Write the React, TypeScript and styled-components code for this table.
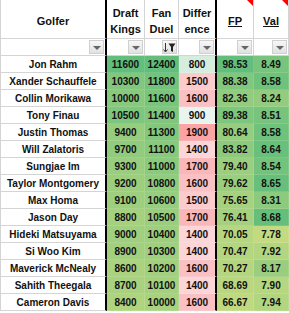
import React from 'react';
import styled, { createGlobalStyle } from 'styled-components';

const GlobalStyle = createGlobalStyle`
    html, body {
        margin: 0;
        padding: 0;
        background: #FFF;
    }
    body {
        font-family: "Liberation Sans", Arial, sans-serif;
    }
`;

type Row = [string, number, number, number, number, number];

const rows: Row[] = [
    ['Jon Rahm', 11600, 12400, 800, 98.53, 8.49],
    ['Xander Schauffele', 10300, 11800, 1500, 88.38, 8.58],
    ['Collin Morikawa', 10000, 11600, 1600, 82.36, 8.24],
    ['Tony Finau', 10500, 11400, 900, 89.38, 8.51],
    ['Justin Thomas', 9400, 11300, 1900, 80.64, 8.58],
    ['Will Zalatoris', 9700, 11100, 1400, 83.82, 8.64],
    ['Sungjae Im', 9300, 11000, 1700, 79.40, 8.54],
    ['Taylor Montgomery', 9200, 10800, 1600, 79.62, 8.65],
    ['Max Homa', 9100, 10600, 1500, 75.65, 8.31],
    ['Jason Day', 8800, 10500, 1700, 76.41, 8.68],
    ['Hideki Matsuyama', 9000, 10400, 1400, 70.05, 7.78],
    ['Si Woo Kim', 8900, 10300, 1400, 70.47, 7.92],
    ['Maverick McNealy', 8600, 10200, 1600, 70.27, 8.17],
    ['Sahith Theegala', 8700, 10100, 1400, 68.69, 7.90],
    ['Cameron Davis', 8400, 10000, 1600, 66.67, 7.94],
];

const GREEN = [99, 190, 123];
const YELLOW = [255, 235, 132];
const WHITE = [252, 252, 255];
const RED = [248, 105, 107];

const mix = (a: number[], b: number[], t: number) => {
    const k = Math.max(0, Math.min(1, t));
    const c = a.map((v, i) => Math.round(v + (b[i] - v) * k));
    return `rgb(${c[0]}, ${c[1]}, ${c[2]})`;
};

// excel style colour scales, high = green
const scale = (v: number, top: number, mid: number) => mix(GREEN, YELLOW, (top - v) / (top - mid));

const diffScale = (v: number) =>
    v <= 1000 ? mix(WHITE, GREEN, (1000 - v) / 800) : mix(WHITE, RED, (v - 1000) / 1500);

const Sheet = styled.div`
    display: grid;
    grid-template-columns: 107px 38px 34px 38px 37px 35px;
    grid-auto-rows: 17px;
    grid-template-rows: 39px 17px;
    width: 289px;
    font-size: 10px;
    font-weight: 700;
    color: #111;
`;

const Cell = styled.div<{ $thick?: boolean; $first?: boolean; $bg?: string }>`
    box-sizing: border-box;
    display: flex;
    align-items: center;
    justify-content: center;
    white-space: nowrap;
    background: ${(p) => p.$bg || '#FFF'};
    border-bottom: 1px solid ${(p) => (p.$bg ? 'rgba(255, 255, 255, 0.12)' : '#D4D4D4')};
    border-right: ${(p) => (p.$thick ? '2px solid #000' : p.$bg ? '1px solid rgba(255, 255, 255, 0.12)' : '1px solid #D4D4D4')};
    border-left: ${(p) => (p.$first ? '1px solid #D4D4D4' : 'none')};
`;

const HeadCell = styled(Cell)<{ $note?: boolean }>`
    position: relative;
    font-size: 11px;
    line-height: 16px;
    text-align: center;
    padding-top: 3px;

    &::after {
        content: '';
        display: ${(p) => (p.$note ? 'block' : 'none')};
        position: absolute;
        top: 0;
        right: 0;
        border-top: 6px solid #FF0000;
        border-left: 6px solid transparent;
    }
`;

const Underlined = styled.span`
    text-decoration: underline;
`;

const FilterCell = styled(Cell)`
    justify-content: flex-end;
    align-items: flex-start;
    padding: 1px 1px 0 0;
`;

const DropButton = styled.div`
    box-sizing: border-box;
    width: 15px;
    height: 14px;
    display: flex;
    align-items: center;
    justify-content: center;
    background: linear-gradient(#F7F7F7, #E1E1E1);
    border: 1px solid #D0D0D0;
`;

const Arrow = styled.div`
    width: 0;
    height: 0;
    border-left: 4px solid transparent;
    border-right: 4px solid transparent;
    border-top: 4px solid #666;
    margin-top: 1px;
`;

const Dropdown: React.FC<{ sorted?: boolean }> = ({ sorted }) => (
    <DropButton>
        {sorted ? (
            <svg width="13" height="11" viewBox="0 0 13 11">
                <path d="M2.5 1 V9.5" stroke="#333" strokeWidth="1" />
                <path d="M0.5 7.5 L2.5 10 L4.5 7.5" stroke="#333" strokeWidth="1" fill="none" />
                <path d="M5.5 1.5 H12.5 L10 5 V10 L8 9 V5 Z" fill="#222" />
            </svg>
        ) : (
            <Arrow />
        )}
    </DropButton>
);

const headers: { label: React.ReactNode; thick?: boolean; note?: boolean; sorted?: boolean }[] = [
    { label: 'Golfer', thick: true },
    { label: <>Draft<br />Kings</> },
    { label: <>Fan<br />Duel</>, sorted: true },
    { label: <>Differ<br />ence</>, thick: true },
    { label: <Underlined>FP</Underlined>, note: true },
    { label: <Underlined>Val</Underlined>, note: true },
];

export default function App() {
    return (
        <>
            <GlobalStyle />
            <Sheet>
                {headers.map((h, i) => (
                    <HeadCell key={`h${i}`} $thick={h.thick} $note={h.note} $first={i === 0}>
                        <span>{h.label}</span>
                    </HeadCell>
                ))}
                {headers.map((h, i) => (
                    <FilterCell key={`f${i}`} $thick={h.thick} $first={i === 0}>
                        <Dropdown sorted={h.sorted} />
                    </FilterCell>
                ))}
                {rows.map(([name, dk, fd, diff, fp, val]) => (
                    <React.Fragment key={name}>
                        <Cell $thick $first>{name}</Cell>
                        <Cell $bg={scale(dk, 11600, 5000)}>{dk}</Cell>
                        <Cell $bg={scale(fd, 12400, 7000)}>{fd}</Cell>
                        <Cell $thick $bg={diffScale(diff)}>{diff}</Cell>
                        <Cell $bg={scale(fp, 98.53, 45)}>{fp.toFixed(2)}</Cell>
                        <Cell $bg={scale(val, 8.7, 7.2)}>{val.toFixed(2)}</Cell>
                    </React.Fragment>
                ))}
            </Sheet>
        </>
    );
}
